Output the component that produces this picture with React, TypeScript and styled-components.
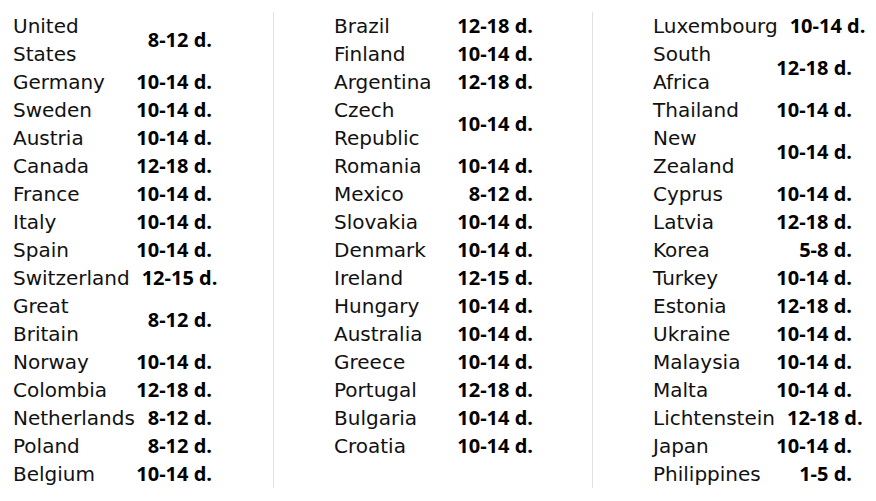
import styled, { createGlobalStyle } from 'styled-components';

const GlobalStyle = createGlobalStyle`
  body {
    margin: 0;
    background: #ffffff;
    color: #000000;
    font-family: "DejaVu Sans", "Noto Sans", sans-serif;
  }
`;

type Entry = { country: string; days: string };

const columnas: Entry[][] = [
    [
        { country: 'United States', days: '8-12 d.' },
        { country: 'Germany', days: '10-14 d.' },
        { country: 'Sweden', days: '10-14 d.' },
        { country: 'Austria', days: '10-14 d.' },
        { country: 'Canada', days: '12-18 d.' },
        { country: 'France', days: '10-14 d.' },
        { country: 'Italy', days: '10-14 d.' },
        { country: 'Spain', days: '10-14 d.' },
        { country: 'Switzerland', days: '12-15 d.' },
        { country: 'Great Britain', days: '8-12 d.' },
        { country: 'Norway', days: '10-14 d.' },
        { country: 'Colombia', days: '12-18 d.' },
        { country: 'Netherlands', days: '8-12 d.' },
        { country: 'Poland', days: '8-12 d.' },
        { country: 'Belgium', days: '10-14 d.' },
    ],
    [
        { country: 'Brazil', days: '12-18 d.' },
        { country: 'Finland', days: '10-14 d.' },
        { country: 'Argentina', days: '12-18 d.' },
        { country: 'Czech Republic', days: '10-14 d.' },
        { country: 'Romania', days: '10-14 d.' },
        { country: 'Mexico', days: '8-12 d.' },
        { country: 'Slovakia', days: '10-14 d.' },
        { country: 'Denmark', days: '10-14 d.' },
        { country: 'Ireland', days: '12-15 d.' },
        { country: 'Hungary', days: '10-14 d.' },
        { country: 'Australia', days: '10-14 d.' },
        { country: 'Greece', days: '10-14 d.' },
        { country: 'Portugal', days: '12-18 d.' },
        { country: 'Bulgaria', days: '10-14 d.' },
        { country: 'Croatia', days: '10-14 d.' },
    ],
    [
        { country: 'Luxembourg', days: '10-14 d.' },
        { country: 'South Africa', days: '12-18 d.' },
        { country: 'Thailand', days: '10-14 d.' },
        { country: 'New Zealand', days: '10-14 d.' },
        { country: 'Cyprus', days: '10-14 d.' },
        { country: 'Latvia', days: '12-18 d.' },
        { country: 'Korea', days: '5-8 d.' },
        { country: 'Turkey', days: '10-14 d.' },
        { country: 'Estonia', days: '12-18 d.' },
        { country: 'Ukraine', days: '10-14 d.' },
        { country: 'Malaysia', days: '10-14 d.' },
        { country: 'Malta', days: '10-14 d.' },
        { country: 'Lichtenstein', days: '12-18 d.' },
        { country: 'Japan', days: '10-14 d.' },
        { country: 'Philippines', days: '1-5 d.' },
    ],
];

const Tabla = styled.div`
    display: flex;
    align-items: stretch;
    margin-top: 12px;
`;

const Columna = styled.div`
    display: flex;
    flex-direction: column;
    padding: 0 59px 0 60px;
    border-left: 1px solid #e1e1e1;

    &:first-child {
        padding: 0 61px 0 13px;
        border-left: none;
    }
`;

const Fila = styled.div`
    display: flex;
    align-items: center;
    justify-content: space-between;
    gap: 12px;
    width: 199px;
`;

const Pais = styled.span`
    font-size: 20px;
    line-height: 28px;
    font-weight: 400;
    color: #111;
`;

const Dias = styled.span`
    font-family: "Open Sans", "Liberation Sans", sans-serif;
    font-size: 20px;
    line-height: 28px;
    font-weight: 700;
    white-space: nowrap;
    color: #000;
`;

const App = () => {
    return (
        <>
            <GlobalStyle />
            <Tabla>
                {columnas.map((col, i) => (
                    <Columna key={i}>
                        {col.map((item) => (
                            <Fila key={item.country}>
                                <Pais>{item.country}</Pais>
                                <Dias>{item.days}</Dias>
                            </Fila>
                        ))}
                    </Columna>
                ))}
            </Tabla>
        </>
    )
}

export default App;
